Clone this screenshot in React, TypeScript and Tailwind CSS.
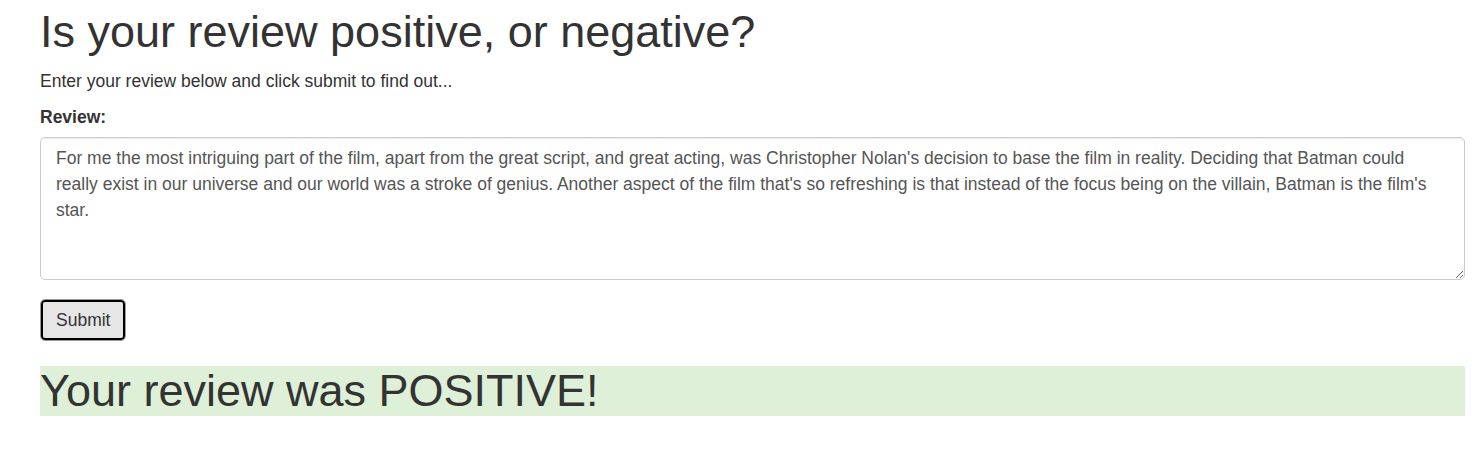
export default function App() {
  return (
    <div className="min-h-screen bg-white font-['Liberation_Sans',Arial,sans-serif] text-[#333]">
      <div className="ml-[40px] w-[1425px] pt-[7px]">
        {/* Header */}
        <h1 className="mb-[12.5px] text-[45px] leading-[49.5px] font-normal">
          Is your review positive, or negative?
        </h1>
        <p className="mb-[11px] text-[17.5px] leading-[25px]">
          Enter your review below and click submit to find out...
        </p>

        {/* Form */}
        <form onSubmit={(e) => e.preventDefault()}>
          <div className="mb-[19px]">
            <label
              htmlFor="review"
              className="mb-[7px] block text-[17.5px] leading-[25px] font-bold"
            >
              Review:
            </label>
            <textarea
              id="review"
              className="block h-[143px] w-full rounded-[5px] border border-[#ccc] px-[15px] pt-[7px] pb-[7.5px] text-[17.5px] leading-[26px] text-[#555] shadow-[inset_0_1px_1px_rgba(0,0,0,0.075)] outline-none"
              defaultValue="For me the most intriguing part of the film, apart from the great script, and great acting, was Christopher Nolan's decision to base the film in reality. Deciding that Batman could really exist in our universe and our world was a stroke of genius. Another aspect of the film that's so refreshing is that instead of the focus being on the villain, Batman is the film's star."
            />
          </div>
          <button
            type="submit"
            className="rounded-[5px] border border-[#9a9a9a] bg-[#e6e6e6] px-[15px] py-[7.5px] text-[17.5px] leading-[25px] text-[#333] shadow-[inset_0_0_0_2px_#000]"
          >
            Submit
          </button>
        </form>

        {/* Result */}
        <h1 className="mt-[25px] bg-[#dff0d8] text-[45px] leading-[49.5px] font-normal">
          Your review was POSITIVE!
        </h1>
      </div>
    </div>
  )
}
